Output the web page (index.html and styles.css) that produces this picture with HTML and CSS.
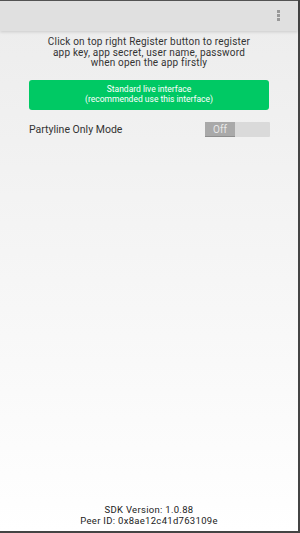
FILE: index.html
```html
<!DOCTYPE html>
<html lang="en">
<head>
  <meta charset="UTF-8" />
  <meta name="viewport" content="width=device-width, initial-scale=1.0"/>
  <title>Live Demo</title>
  <link rel="stylesheet" href="styles.css">
</head>
<body>
<div class="screen">
  <header class="topbar">
    <span class="menu"><i></i><i></i><i></i></span>
  </header>

  <main class="content">
    <p class="hint">Click on top right Register button to register<br>app key, app secret, user name, password<br>when open the app firstly</p>

    <button class="btn-live">Standard live interface<br>(recommended use this interface)</button>

    <div class="row">
      <span class="label">Partyline Only Mode</span>
      <span class="toggle"><span class="knob">Off</span></span>
    </div>
  </main>

  <footer class="info">
    <div>SDK Version: 1.0.88</div>
    <div>Peer ID: 0x8ae12c41d763109e</div>
  </footer>
</div>
</body>
</html>
```

FILE: styles.css
```css
html, body {
  margin: 0;
  height: 100%;
}

body {
  font-family: Roboto, "Noto Sans", sans-serif;
  color: #333;
  background: #444;
}

.screen {
  height: 531px;
  margin-right: 2px;
  display: flex;
  flex-direction: column;
  background: linear-gradient(#ececec, #ffffff);
  box-sizing: border-box;
  border-top: 1px solid #555;
}

.topbar {
  height: 30px;
  background: #e0e0e0;
  display: flex;
  justify-content: flex-end;
  align-items: center;
  padding-right: 18px;
  box-shadow: 0 1px 3px rgba(0,0,0,0.15);
  flex-shrink: 0;
}

.menu {
  display: flex;
  flex-direction: column;
  gap: 1px;
  margin-top: -2px;
}

.menu i {
  display: block;
  width: 3px;
  height: 3px;
  background: #999;
}

.content {
  flex: 1;
  padding: 6px 29px 0 29px;
}

.hint {
  margin: 0;
  text-align: center;
  font-size: 10px;
  line-height: 10.5px;
  letter-spacing: 0.2px;
  color: #333;
}

.btn-live {
  display: block;
  width: 100%;
  margin-top: 11px;
  height: 30px;
  border: none;
  border-radius: 3px;
  background: #00c964;
  color: #fff;
  font-family: inherit;
  font-size: 8.5px;
  line-height: 9.5px;
  padding: 0;
}

.row {
  display: flex;
  justify-content: space-between;
  align-items: center;
  margin-top: 12px;
}

.label {
  font-size: 10.5px;
  color: #333;
}

.toggle {
  width: 65px;
  height: 15px;
  margin-right: -1px;
  background: #dadada;
  border-radius: 1px;
  display: flex;
}

.knob {
  width: 30px;
  background: #a9a9a9;
  color: #e8e8e8;
  font-size: 10px;
  line-height: 15px;
  text-align: center;
  border-bottom: 1px solid #8e8e8e;
  box-sizing: border-box;
}

.info {
  text-align: center;
  font-size: 9.5px;
  line-height: 10.5px;
  letter-spacing: 0.3px;
  color: #222;
  padding-bottom: 5px;
}
```
